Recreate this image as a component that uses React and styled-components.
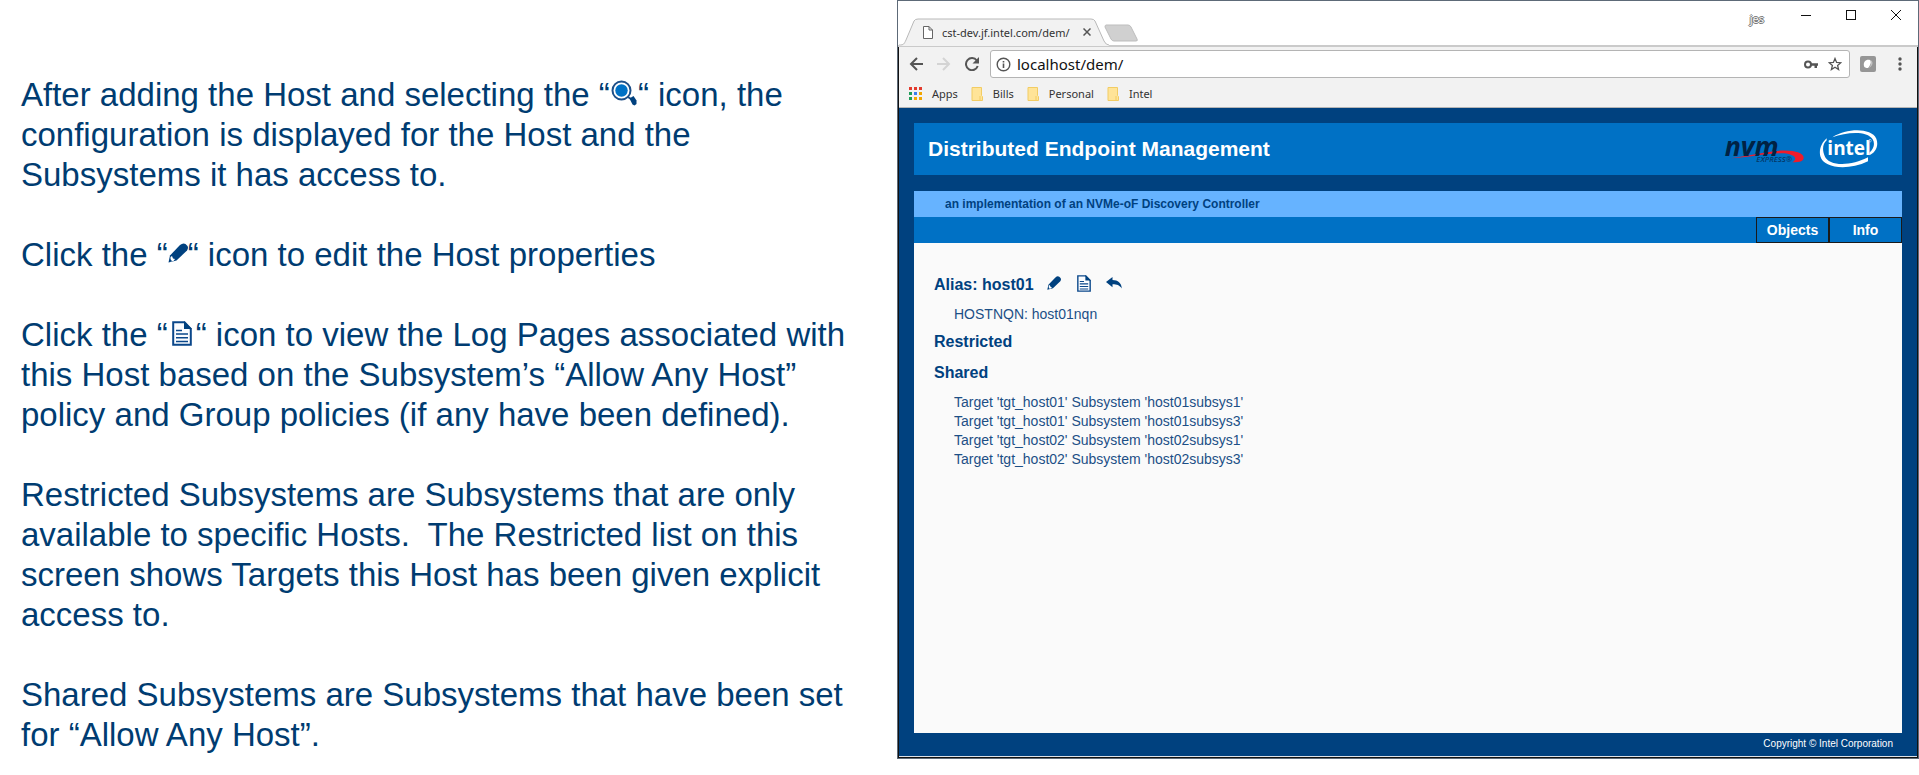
import React from 'react';
import styled, { createGlobalStyle } from 'styled-components';

const NAVY = '#00417f';
const BLUE = '#0071c5';
const ARIAL = '"Liberation Sans", Arial, sans-serif';
const CHROME = '"Noto Sans", "Open Sans", sans-serif';

const GlobalStyle = createGlobalStyle`
  * { box-sizing: border-box; }
  body { margin: 0; background: #fff; font-family: ${ARIAL}; }
`;

const Page = styled.div`
  display: grid;
  grid-template-columns: 897fr 1022fr;
  min-height: 100vh;
  padding-bottom: 16px;
`;

const Notes = styled.main`
  padding: 75px 0 0 21px;
  color: #003c71;
  font-size: 33px;
  line-height: 40px;
`;

const Paragraph = styled.p`
  margin: 0 0 40px;
  white-space: pre-wrap;
  &:last-child { margin-bottom: 0; }
`;

const InlineIcon = styled.span`
  display: inline-flex;
  justify-content: center;
  width: ${(p) => p.$width}px;
  vertical-align: ${(p) => p.$rise || 0}px;
`;

const Browser = styled.section`
  display: flex;
  flex-direction: column;
  border: 1px solid #5d6a78;
  background: #fff;
`;

const TabStrip = styled.header`
  display: flex;
  height: 46px;
  padding-left: 1px;
  border-bottom: 2px solid #cacaca;
  background: #fff;
`;

const Tab = styled.div`
  position: relative;
  display: flex;
  align-items: center;
  flex: none;
  width: 210px;
  height: 28px;
  margin: 17px 0 0;
  padding: 0 18px 0 24px;
  color: #333;
  font: 11px ${CHROME};
  white-space: nowrap;
`;

const TabShape = styled.svg`
  position: absolute;
  left: 0;
  top: 0;
`;

const TabLabel = styled.span`
  position: relative;
  flex: 1;
  margin-left: 9px;
`;

const Layered = styled.svg`
  position: relative;
  flex: none;
`;

const PlainButton = styled.button`
  display: flex;
  align-items: center;
  justify-content: center;
  flex: none;
  width: ${(p) => p.$width || 20}px;
  height: ${(p) => p.$height || 20}px;
  margin: 0;
  padding: 0;
  border: 0;
  background: none;
  color: #555;
  position: relative;
`;

const NewTab = styled(PlainButton)`
  margin-top: 22px;
  margin-left: -6px;
`;

const WindowControls = styled.div`
  display: flex;
  align-items: flex-start;
  margin-left: auto;
  padding: 4px 12px 0 0;
  gap: 25px;
`;

const Profile = styled.span`
  margin-right: 7px;
  padding-top: 4px;
  color: #f4f4f4;
  font: 11px/20px ${CHROME};
  text-shadow: 1px 0 #777, -1px 0 #777, 0 1px #777, 0 -1px #777;
`;

const Toolbar = styled.div`
  display: flex;
  align-items: center;
  height: 34px;
  padding: 0 7px;
  background: #f2f2f2;
  border-left: 1px solid #111;
  border-right: 1px solid #111;
`;

const NavButtons = styled.div`
  display: flex;
  gap: 8px;
  margin-right: 8px;
`;

const AddressBar = styled.label`
  display: flex;
  align-items: center;
  flex: 1;
  height: 28px;
  padding: 0 2px 0 5px;
  border: 1px solid #b4b4b4;
  border-radius: 3px;
  background: #fff;
`;

const AddressInput = styled.input`
  flex: 1;
  min-width: 0;
  margin-left: 6px;
  padding: 0;
  border: 0;
  outline: 0;
  color: #111;
  font: 15px ${CHROME};
`;

const ToolbarEnd = styled.div`
  display: flex;
  gap: 12px;
  margin-left: 8px;
`;

const Bookmarks = styled.nav`
  display: flex;
  align-items: center;
  gap: 13px;
  height: 27px;
  padding: 0 0 2px 10px;
  border: solid #111;
  border-width: 0 1px;
  box-shadow: inset 0 -1px #b6b6b6;
  background: #f2f2f2;
`;

const Bookmark = styled.a`
  display: flex;
  align-items: center;
  gap: 10px;
  color: #333;
  font: 11px ${CHROME};
  text-decoration: none;
`;

const Site = styled.div`
  display: flex;
  flex-direction: column;
  flex: 1;
  padding: 15px 15px 0;
  border: solid #111;
  border-width: 0 1px 1px;
  box-shadow: inset 0 -1px #dde3ea;
  background: ${NAVY};
`;

const Banner = styled.header`
  display: flex;
  align-items: center;
  justify-content: space-between;
  height: 52px;
  margin-bottom: 16px;
  padding: 0 22px 0 14px;
  background: ${BLUE};
`;

const Title = styled.h1`
  margin: 0;
  color: #fff;
  font-size: 21px;
  line-height: 24px;
`;

const Tagline = styled.div`
  height: 26px;
  padding-left: 31px;
  background: #66b3ff;
  color: ${NAVY};
  font-size: 12px;
  font-weight: bold;
  line-height: 26px;
`;

const Menu = styled.nav`
  display: flex;
  justify-content: flex-end;
  height: 26px;
  background: ${BLUE};
`;

const MenuButton = styled.button`
  width: 73px;
  padding: 0;
  border: 1px solid #1a1a1a;
  background: ${BLUE};
  color: #fff;
  font: bold 14px ${ARIAL};
`;

const Panel = styled.div`
  flex: 1;
  padding: 30px 20px;
  background: #fafafa;
  color: ${NAVY};
`;

const HostRow = styled.div`
  display: flex;
  align-items: center;
  height: 24px;
`;

const Heading = styled.h2`
  margin: 0;
  font-size: 16px;
  line-height: 24px;
`;

const HostActions = styled.div`
  display: flex;
  gap: 10px;
  margin-left: 10px;
  padding-bottom: 4px;
`;

const HostNqn = styled.p`
  margin: 8px 0 7px 20px;
  color: #1c4f86;
  font-size: 14px;
  line-height: 18px;
`;

const SharedHeading = styled(Heading)`
  margin-top: 7px;
`;

const Targets = styled.ul`
  margin: 8px 0 0 20px;
  padding: 0;
  list-style: none;
  color: #1c4f86;
  font-size: 14px;
  line-height: 19px;
`;

const Footer = styled.footer`
  height: 24px;
  padding-right: 9px;
  color: #fff;
  font-size: 10px;
  line-height: 22px;
  text-align: right;
`;

const Magnifier = () => (
  <svg width="26" height="26" viewBox="0 0 26 26">
    <circle cx="10.500" cy="10.500" r="9" fill="#fff" stroke="#1d4f88" strokeWidth="2" />
    <circle cx="10.500" cy="10.500" r="6.200" fill={BLUE} />
    <path d="M17 17l3 2" stroke="#1d4f88" strokeWidth="2" />
    <path d="M18.500 18.500l4-2.500 3 4.500v3.500l-2 1.500-2-1z" fill={NAVY} />
  </svg>
);

const Pencil = ({ size = 14 }) => (
  <svg width={size} height={size} viewBox="0 0 20 20">
    <path d="M.5 19.500l1.500-7L12 2Q15-.5 17.500 1L19 2.500q2 2 0 5L8.500 17.500z" fill={NAVY} />
    <path d="M2.500 14l1.500-1 1 2.500 2 .5-1.500 2-3 .5z" fill="#fff" />
    <path d="M1 19l1-3 2 2z" fill={NAVY} />
  </svg>
);

const Doc = ({ width = 14, height = 17 }) => (
  <svg width={width} height={height} viewBox="0 0 20 25" preserveAspectRatio="none">
    <path d="M1.200 1.200H12.500L18.800 8V23.800H1.200z" fill="#fafcff" stroke="#0a478a" strokeWidth="2" />
    <path d="M12 0l8 8h-8z" fill={NAVY} />
    <path d="M4 9.500h6M4 13h12M4 16.800h12M4 20.500h12" stroke="#0a478a" strokeWidth="1.600" />
  </svg>
);

const Reply = () => (
  <svg width="16" height="12" viewBox="0 0 16 12">
    <path d="M0 5L6.500 0v3C12 3 15.500 6 15.800 11.500 13.500 8 11 7.200 6.500 7.200v3z" fill={NAVY} />
  </svg>
);

const Folder = () => (
  <svg width="12" height="14" viewBox="0 0 12 14">
    <path d="M1 .5h9.500v8l1 1v4H1z" fill="#ffe498" stroke="#f2cc63" />
    <path d="M9 9v4.500" stroke="#f2cc63" />
  </svg>
);

const APP_COLORS = ['#e33b2e', '#e33b2e', '#e33b2e', '#1f9d58', '#3b7ded', '#f2a600', '#1f9d58', '#f2a600', '#f2a600'];
const AppsGrid = () => (
  <svg width="13" height="13" viewBox="0 0 13 13">
    {APP_COLORS.map((c, i) => (
      <rect key={i} x={(i % 3) * 5} y={Math.floor(i / 3) * 5} width="3" height="3" fill={c} />
    ))}
  </svg>
);

const Logos = () => (
  <svg width="157" height="42" viewBox="188 60 471 126" role="img" aria-label="NVM Express and Intel">
    <path d="M212 151Q290 138 345 129C400 124 429 134 430 149 430 158 421 163 396 163 408 154 411 145 382 137 345 131 280 146 212 151z" fill="#ed1c2b" />
    <text x="193" y="144" fontFamily="Open Sans, sans-serif" fontWeight="700" fontStyle="italic" fontSize="80" fill="#002244">nvm</text>
    <text x="288" y="162" fontFamily="Open Sans, sans-serif" fontWeight="600" fontStyle="italic" fontSize="23" fill="#043866">EXPRESS®</text>
    <path d="M516 88C560 60 632 59 648 92 657 118 642 135 627 142V134C640 122 645 108 637 94 620 68 560 72 516 88z" fill="#fff" />
    <path d="M499 91C484 104 475 125 480 145 489 180 560 190 623 160V148C574 174 506 177 493 144 485 125 487 108 499 97z" fill="#fff" />
    <text x="501" y="141" fontFamily="Open Sans, sans-serif" fontWeight="700" fontSize="57" fill="#fff">intel</text>
    <circle cx="629" cy="98" r="4" fill="none" stroke="#b9d9f2" strokeWidth="2" />
  </svg>
);

const TARGETS = [
  ['tgt_host01', 'host01subsys1'],
  ['tgt_host01', 'host01subsys3'],
  ['tgt_host02', 'host02subsys1'],
  ['tgt_host02', 'host02subsys3'],
];

export default function App() {
  return (
    <Page>
      <GlobalStyle />
      <Notes>
        <Paragraph>
          After adding the Host and selecting the “<InlineIcon $width={28}><Magnifier /></InlineIcon>“ icon, the<br />
          configuration is displayed for the Host and the<br />
          Subsystems it has access to.
        </Paragraph>
        <Paragraph>
          Click the “<InlineIcon $width={20} $rise={3}><Pencil size={20} /></InlineIcon>“ icon to edit the Host properties
        </Paragraph>
        <Paragraph>
          Click the “<InlineIcon $width={28}><Doc width={20} height={25} /></InlineIcon>“ icon to view the Log Pages associated with<br />
          this Host based on the Subsystem’s “Allow Any Host”<br />
          policy and Group policies (if any have been defined).
        </Paragraph>
        <Paragraph>
          Restricted Subsystems are Subsystems that are only<br />
          {'available to specific Hosts.  The Restricted list on this'}<br />
          screen shows Targets this Host has been given explicit<br />
          access to.
        </Paragraph>
        <Paragraph>
          Shared Subsystems are Subsystems that have been set<br />
          for “Allow Any Host”.
        </Paragraph>
      </Notes>

      <Browser>
        <TabStrip>
          <Tab>
            <TabShape width="210" height="28" viewBox="0 0 210 28">
              <path d="M0 27C5 27 5 26 7 22L15 3q1-2 4-2H192q3 0 4 2l9 20q2 4 5 4V28H0z" fill="#f2f2f2" />
              <path d="M0 27C5 27 5 26 7 22L15 3q1-2 4-2H192q3 0 4 2l9 20q2 4 5 4" fill="none" stroke="#b9b9b9" />
            </TabShape>
            <Layered width="10" height="13" viewBox="0 0 10 13">
              <path d="M.5.5H6L9.500 4v8.500h-9zM6 .5V4h3.500" fill="#fff" stroke="#666" />
            </Layered>
            <TabLabel>cst-dev.jf.intel.com/dem/</TabLabel>
            <PlainButton $width={8} $height={8} aria-label="Close tab">
              <svg width="8" height="8" viewBox="0 0 8 8"><path d="M.5.500l7 7m0-7l-7 7" stroke="#555" strokeWidth="1.500" /></svg>
            </PlainButton>
          </Tab>
          <NewTab $width={36} aria-label="New tab">
            <svg width="36" height="20" viewBox="0 0 36 20"><path d="M3 2H25q2 0 3 2l6 12q1 2-1 2H11q-2 0-3-2L2 4q0-2 1-2z" fill="#d0d0d0" stroke="#bdbdbd" /></svg>
          </NewTab>
          <WindowControls>
            <Profile>jes</Profile>
            <PlainButton aria-label="Minimize"><svg width="10" height="10"><path d="M0 5.500h10" stroke="#111" /></svg></PlainButton>
            <PlainButton aria-label="Maximize"><svg width="10" height="10"><rect x=".5" y=".5" width="9" height="9" fill="none" stroke="#111" /></svg></PlainButton>
            <PlainButton aria-label="Close"><svg width="10" height="10"><path d="M0 0l10 10m0-10L0 10" stroke="#111" /></svg></PlainButton>
          </WindowControls>
        </TabStrip>

        <Toolbar>
          <NavButtons>
            <PlainButton aria-label="Back"><svg width="14" height="14" viewBox="0 0 14 14"><path d="M14 7H2m6-6L2 7l6 6" fill="none" stroke="#555" strokeWidth="2" /></svg></PlainButton>
            <PlainButton aria-label="Forward"><svg width="14" height="14" viewBox="0 0 14 14"><path d="M0 7h12M6 1l6 6-6 6" fill="none" stroke="#d4d4d4" strokeWidth="2" /></svg></PlainButton>
            <PlainButton aria-label="Reload"><svg width="14" height="14" viewBox="0 0 14 14"><path d="M11.800 3.500A6 6 0 1 0 12.700 9" fill="none" stroke="#555" strokeWidth="2" /><path d="M14 0v6.500H7.500z" fill="#555" /></svg></PlainButton>
          </NavButtons>
          <AddressBar>
            <svg width="15" height="15" viewBox="0 0 15 15"><circle cx="7.500" cy="7.500" r="6.300" fill="none" stroke="#555" strokeWidth="1.400" /><path d="M7.500 6.500V11M7.500 4v1.500" stroke="#555" strokeWidth="1.600" /></svg>
            <AddressInput aria-label="Address" defaultValue="localhost/dem/" />
            <PlainButton $width={24} aria-label="Saved passwords"><svg width="14" height="9" viewBox="0 0 14 9"><circle cx="4" cy="4.500" r="3" fill="none" stroke="#555" strokeWidth="2" /><path d="M7 3.200h7v2.600h-1V8h-2.500V5.800H7z" fill="#555" /></svg></PlainButton>
            <PlainButton $width={24} aria-label="Bookmark page"><svg width="14" height="14" viewBox="0 0 14 14"><path d="M7 1.500l1.600 3.900 4.200.3-3.200 2.700 1 4.100L7 10.300l-3.600 2.200 1-4.100L1.200 5.700l4.200-.3z" fill="none" stroke="#555" strokeWidth="1.300" /></svg></PlainButton>
          </AddressBar>
          <ToolbarEnd>
            <PlainButton aria-label="Extension"><svg width="16" height="16" viewBox="0 0 16 16"><rect width="16" height="16" rx="2" fill="#969696" /><path d="M4 10C3 6 6 3 10 4c2 2 0 6-2 8-2 0-4-.5-4-2z" fill="#fff" /><path d="M10 4c4 1 3 6-1 8 2-3 3-6 1-8z" fill="#c4c4c4" /></svg></PlainButton>
            <PlainButton aria-label="Menu"><svg width="4" height="14" viewBox="0 0 4 14"><circle cx="2" cy="2" r="1.700" fill="#555" /><circle cx="2" cy="7" r="1.700" fill="#555" /><circle cx="2" cy="12" r="1.700" fill="#555" /></svg></PlainButton>
          </ToolbarEnd>
        </Toolbar>
        <Bookmarks aria-label="Bookmarks">
          <Bookmark href="#apps"><AppsGrid />Apps</Bookmark>
          <Bookmark href="#bills"><Folder />Bills</Bookmark>
          <Bookmark href="#personal"><Folder />Personal</Bookmark>
          <Bookmark href="#intel"><Folder />Intel</Bookmark>
        </Bookmarks>

        <Site>
          <Banner>
            <Title>Distributed Endpoint Management</Title>
            <Logos />
          </Banner>
          <Tagline>an implementation of an NVMe-oF Discovery Controller</Tagline>
          <Menu>
            <MenuButton>Objects</MenuButton>
            <MenuButton>Info</MenuButton>
          </Menu>
          <Panel>
            <HostRow>
              <Heading>Alias: host01</Heading>
              <HostActions>
                <PlainButton aria-label="Edit host"><Pencil /></PlainButton>
                <PlainButton aria-label="View log pages"><Doc /></PlainButton>
                <PlainButton aria-label="Go back"><Reply /></PlainButton>
              </HostActions>
            </HostRow>
            <HostNqn>HOSTNQN: host01nqn</HostNqn>
            <Heading>Restricted</Heading>
            <SharedHeading>Shared</SharedHeading>
            <Targets>
              {TARGETS.map(([target, subsystem]) => (
                <li key={subsystem}>{`Target '${target}' Subsystem '${subsystem}'`}</li>
              ))}
            </Targets>
          </Panel>
          <Footer>Copyright © Intel Corporation</Footer>
        </Site>
      </Browser>
    </Page>
  );
}
